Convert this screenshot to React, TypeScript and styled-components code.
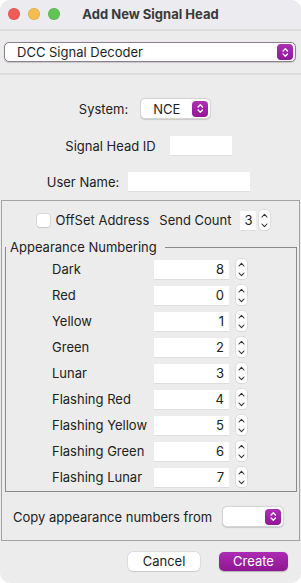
import React from "react";
import styled, { createGlobalStyle } from "styled-components";

const Global = createGlobalStyle`
  html, body { margin: 0; padding: 0; background: #ffffff; }
  body { font-family: Inter, "Noto Sans", sans-serif; font-size: 13px; color: #222; }
`;

const Window = styled.div`
  width: 301px; height: 583px; box-sizing: border-box;
  background: #ececec; border-radius: 10px; overflow: hidden;
  display: flex; flex-direction: column;
`;
const TitleBar = styled.div`
  height: 28px; background: #ebebf0;
  display: grid; grid-template-columns: 1fr auto 1fr; align-items: center;
`;
const Lights = styled.div` display: flex; gap: 8px; padding-left: 8px; `;
const Light = styled.span<{ $c: string }>`
  width: 12px; height: 12px; border-radius: 50%; background: ${p => p.$c};
  box-shadow: inset 0 0 0 0.5px rgba(0,0,0,.12);
`;
const Title = styled.div` font-weight: 700; font-size: 13px; color: #3a3a3a; `;
const Sep = styled.div` height: 2px; background: #dcdcdc; margin-top: 1px; `;

const TopPane = styled.div` padding: 11px 5px 10px 4px; `;

const Combo = styled.div<{ $w?: number; $outlined?: boolean }>`
  height: ${p => (p.$outlined ? 20 : 21)}px; width: ${p => (p.$w ? `${p.$w}px` : "auto")};
  box-sizing: border-box; background: #fff; border-radius: 5px;
  border: ${p => (p.$outlined ? "1px solid #8d7d91" : "0.5px solid #d6d6d6")};
  box-shadow: 0 0.5px 1px rgba(0,0,0,.15);
  display: flex; align-items: center; justify-content: space-between;
  padding: 0 2px 0 12px;
`;
const ComboText = styled.span` font-size: 13px; color: #1f1f1f; `;
const Stepper = styled.span`
  width: 16px; height: 16px; border-radius: 4px; flex: none;
  background: linear-gradient(#ad2fb5, #931597);
  display: flex; align-items: center; justify-content: center;
`;

const Form = styled.div`
  display: flex; flex-direction: column; align-items: center;
  padding: 23px 4px 0 0; gap: 17px;
`;
const Row = styled.div<{ $gap: number; $nudge?: number }>`
  display: flex; align-items: center; gap: ${p => p.$gap}px;
  margin-right: ${p => p.$nudge || 0}px;
`;
const Field = styled.div<{ $w: number; $align?: string }>`
  width: ${p => p.$w}px; height: 19px; box-sizing: border-box;
  background: #fff; box-shadow: 0 0.5px 0 #d0d0d0;
  text-align: ${p => p.$align || "left"}; padding: 0 5px; line-height: 19px; font-size: 13px;
`;

const Outer = styled.div`
  margin: 9px 1px 0 1px; border: 1px solid #a3a3a3;
  display: flex; flex-direction: column;
`;
const OffsetRow = styled.div`
  display: flex; align-items: center; justify-content: center;
  padding: 9px 0 0 6px; height: 20px; gap: 6px;
`;
const Check = styled.span`
  width: 13px; height: 13px; border-radius: 3px; background: #fff;
  box-shadow: 0 0 0 0.5px #c8c8c8, 0 0.5px 1px rgba(0,0,0,.15);
`;
const Group = styled.fieldset`
  margin: 9px 2px 0 3px; padding: 4px 0 4px 0; border: 1px solid #8a8a8a;
  border-radius: 0; min-width: 0;
  legend { padding: 0 8px 0 4px; margin-left: 0; font-size: 13px; line-height: 16px; color: #222; }
`;
const Grid = styled.div`
  display: grid; grid-template-columns: 102px 75px auto; row-gap: 6px;
  padding-left: 46px; align-items: center;
`;
const Label = styled.span` font-size: 13px; color: #222; `;
const Spin = styled.span<{ $gap?: number }>`
  width: 11px; height: 20px; margin-left: ${p => p.$gap ?? 7}px; border-radius: 4px; background: #fff;
  box-shadow: 0 0 0 0.5px #cfcfcf, 0 0.5px 1px rgba(0,0,0,.12);
  display: flex; flex-direction: column; align-items: center; justify-content: space-around;
`;
const CopyRow = styled.div`
  display: flex; align-items: center; justify-content: space-between;
  padding: 14px 15px 13px 11px;
`;
const Buttons = styled.div`
  display: flex; justify-content: flex-end; gap: 19px; padding: 11px 13px 0 0;
`;
const Button = styled.div<{ $primary?: boolean }>`
  height: 19px; line-height: 19px; border-radius: 5px; text-align: center;
  width: ${p => (p.$primary ? 69 : 72)}px; font-size: 13px;
  color: ${p => (p.$primary ? "#fff" : "#222")};
  background: ${p => (p.$primary ? "linear-gradient(#ac2bb4, #8f1694)" : "#fff")};
  box-shadow: ${p => (p.$primary ? "0 0.5px 1px rgba(0,0,0,.25)" : "0 0 0 0.5px #d0d0d0, 0 0.5px 1px rgba(0,0,0,.15)")};
`;

const UpDown = ({ color, size }: { color: string; size: number }) => (
  <svg width={size * 0.6} height={size} viewBox="0 0 6 10" fill="none" stroke={color} strokeWidth="1.2" strokeLinecap="round" strokeLinejoin="round">
    <path d="M1 3.6 L3 1.6 L5 3.6" />
    <path d="M1 6.4 L3 8.4 L5 6.4" />
  </svg>
);

const Chevron = ({ up }: { up?: boolean }) => (
  <svg width="7" height="5" viewBox="0 0 7 5" fill="none" stroke="#333" strokeWidth="1.1" strokeLinecap="round" strokeLinejoin="round">
    <path d={up ? "M1 4 L3.5 1.3 L6 4" : "M1 1 L3.5 3.7 L6 1"} />
  </svg>
);

const Spinner = ({ gap }: { gap?: number }) => (
  <Spin $gap={gap}>
    <Chevron up />
    <Chevron />
  </Spin>
);

const appearances: [string, number][] = [
  ["Dark", 8], ["Red", 0], ["Yellow", 1], ["Green", 2], ["Lunar", 3],
  ["Flashing Red", 4], ["Flashing Yellow", 5], ["Flashing Green", 6], ["Flashing Lunar", 7],
];

export default function App() {
  return (
    <Window>
      <Global />
      <TitleBar>
        <Lights>
          <Light $c="#ee5c56" />
          <Light $c="#f5bd4f" />
          <Light $c="#5fc454" />
        </Lights>
        <Title>Add New Signal Head</Title>
        <span />
      </TitleBar>
      <Sep />
      <TopPane>
        <Combo $outlined>
          <ComboText>DCC Signal Decoder</ComboText>
          <Stepper><UpDown color="#fff" size={11} /></Stepper>
        </Combo>
      </TopPane>
      <Sep />
      <Form>
        <Row $gap={12} $nudge={7}>
          <Label>System:</Label>
          <Combo $w={71}>
            <ComboText>NCE</ComboText>
            <Stepper><UpDown color="#fff" size={11} /></Stepper>
          </Combo>
        </Row>
        <Row $gap={14}>
          <Label>Signal Head ID</Label>
          <Field $w={62} />
        </Row>
        <Row $gap={9}>
          <Label>User Name:</Label>
          <Field $w={122} />
        </Row>
      </Form>
      <Outer>
        <OffsetRow>
          <Check />
          <Label>OffSet Address</Label>
          <Label style={{ marginLeft: 4 }}>Send Count</Label>
          <Field $w={16} $align="center" style={{ padding: 0, marginLeft: 3 }}>3</Field>
          <Spinner gap={-3} />
        </OffsetRow>
        <Group>
          <legend>Appearance Numbering</legend>
          <Grid>
            {appearances.map(([name, n]) => (
              <React.Fragment key={name}>
                <Label>{name}</Label>
                <Field $w={75} $align="right">{n}</Field>
                <Spinner />
              </React.Fragment>
            ))}
          </Grid>
        </Group>
        <CopyRow>
          <Label>Copy appearance numbers from</Label>
          <Combo $w={62}>
            <span />
            <Stepper><UpDown color="#fff" size={11} /></Stepper>
          </Combo>
        </CopyRow>
      </Outer>
      <Buttons>
        <Button>Cancel</Button>
        <Button $primary>Create</Button>
      </Buttons>
    </Window>
  );
}
